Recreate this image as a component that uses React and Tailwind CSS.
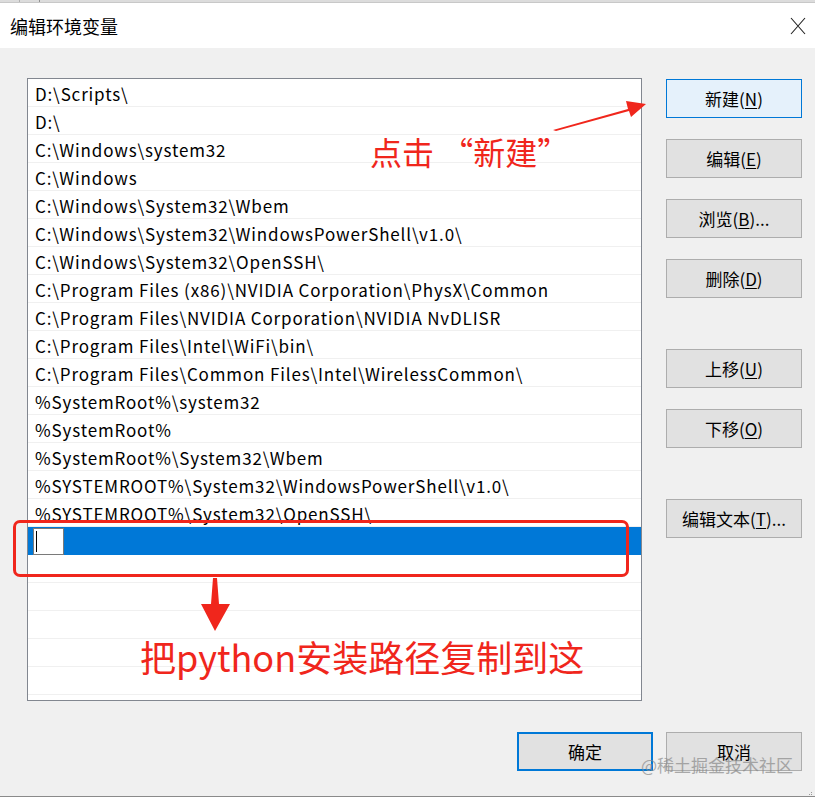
import React from "react";

const rows = [
  "D:\\Scripts\\",
  "D:\\",
  "C:\\Windows\\system32",
  "C:\\Windows",
  "C:\\Windows\\System32\\Wbem",
  "C:\\Windows\\System32\\WindowsPowerShell\\v1.0\\",
  "C:\\Windows\\System32\\OpenSSH\\",
  "C:\\Program Files (x86)\\NVIDIA Corporation\\PhysX\\Common",
  "C:\\Program Files\\NVIDIA Corporation\\NVIDIA NvDLISR",
  "C:\\Program Files\\Intel\\WiFi\\bin\\",
  "C:\\Program Files\\Common Files\\Intel\\WirelessCommon\\",
  "%SystemRoot%\\system32",
  "%SystemRoot%",
  "%SystemRoot%\\System32\\Wbem",
  "%SYSTEMROOT%\\System32\\WindowsPowerShell\\v1.0\\",
  "%SYSTEMROOT%\\System32\\OpenSSH\\",
];

const font = { fontFamily: '"Noto Sans CJK SC", "Noto Sans", sans-serif' };

function Btn({ label, u, suffix = "", primary, className = "" }) {
  return (
    <div
      className={
        "h-[39px] w-[136px] flex items-center justify-center text-[17px] text-black " +
        (primary
          ? "bg-[#e5f1fb] border border-[#0078d7] "
          : "bg-[#e1e1e1] border border-[#adadad] ") +
        className
      }
    >
      <span>
        {label}(<span className="underline underline-offset-2">{u}</span>){suffix}
      </span>
    </div>
  );
}

export default function App() {
  return (
    <div className="relative w-[815px] h-[800px] bg-white overflow-hidden flex flex-col" style={font}>
      {/* top strip */}
      <div className="h-[3px] bg-[#dcdcdc] border-b border-[#c8c8c8] flex">
        <div className="w-[20px] border-r border-[#b0b0b0]" />
        <div className="w-[20px] border-r border-[#909090]" />
      </div>
      {/* title bar */}
      <div className="h-[45px] bg-white flex items-center justify-between pl-[10px] pr-[6px]">
        <span className="text-[18px] text-black leading-none">编辑环境变量</span>
        <svg width="18" height="18" viewBox="0 0 18 18" className="mr-[2px]">
          <path d="M2 1 L16 17 M16 1 L2 17" stroke="#222" strokeWidth="1.1" fill="none" />
        </svg>
      </div>
      {/* body */}
      <div className="h-[749px] bg-[#f0f0f0] border-b border-[#8a8a8a] flex flex-col">
        <div className="flex pt-[30px] pl-[27px]">
          {/* list */}
          <div className="w-[615px] h-[623px] bg-white border border-[#828790] overflow-hidden flex flex-col">
            {rows.map((r, i) => (
              <div
                key={i}
                className="h-[28px] shrink-0 border-b border-[#f0f0f0] pl-[7px] pt-[2px] flex items-center text-[17px] tracking-[0.85px] text-black leading-none whitespace-nowrap"
              >
                {r}
              </div>
            ))}
            <div className="h-[28px] shrink-0 bg-[#0078d7] flex items-center pl-[5px]">
              <div className="w-[31px] h-[27px] bg-white border border-[#7a7a7a] flex items-center pl-[2px]">
                <div className="w-[1px] h-[21px] bg-black" />
              </div>
            </div>
            {[0, 1, 2, 3, 4, 5].map((i) => (
              <div key={i} className="h-[28px] shrink-0 border-b border-[#f0f0f0]" />
            ))}
          </div>
          {/* buttons */}
          <div className="ml-[24px] pt-[1px] flex flex-col">
            <Btn label="新建" u="N" primary />
            <Btn label="编辑" u="E" className="mt-[21px]" />
            <Btn label="浏览" u="B" suffix="..." className="mt-[21px]" />
            <Btn label="删除" u="D" className="mt-[21px]" />
            <Btn label="上移" u="U" className="mt-[51px]" />
            <Btn label="下移" u="O" className="mt-[21px]" />
            <Btn label="编辑文本" u="T" suffix="..." className="mt-[51px]" />
          </div>
        </div>
        <div className="flex justify-end gap-[13px] pr-[13px] mt-[31px]">
          <div className="h-[39px] w-[136px] flex items-center justify-center text-[17px] text-black bg-[#e1e1e1] border-2 border-[#0078d7]">
            确定
          </div>
          <div className="h-[39px] w-[136px] flex items-center justify-center text-[17px] text-black bg-[#e1e1e1] border border-[#adadad]">
            取消
          </div>
        </div>
      </div>

      {/* grip */}
      <div className="absolute right-[3px] bottom-[5px] grid grid-cols-3 gap-[1px]">
        <div className="w-[1px] h-[1px]" />
        <div className="w-[1px] h-[1px]" />
        <div className="w-[1px] h-[1px] bg-[#999]" />
        <div className="w-[1px] h-[1px]" />
        <div className="w-[1px] h-[1px] bg-[#999]" />
        <div className="w-[1px] h-[1px] bg-[#999]" />
      </div>

      {/* annotations */}
      <div className="absolute left-[13px] top-[520px] w-[616px] h-[57px] border-[3px] border-[#f0261c] rounded-[7px]" />
      <div className="absolute left-[370px] top-[135px] text-[32px] leading-none text-[#f0261c] whitespace-nowrap">
        点击 “新建”
      </div>
      <div className="absolute left-[140px] top-[638px] text-[36px] leading-none text-[#f0261c] whitespace-nowrap">
        把python安装路径复制到这
      </div>
      <svg className="absolute left-0 top-0" width="815" height="800" viewBox="0 0 815 800" style={{ pointerEvents: "none" }}>
        <polygon points="553,130 628,109 626,101 646,104 631,117 629,111 556,131" fill="#f0261c" />
        <polygon points="213,578 217,578 219,604 230,604 215,631 201,604 211,604" fill="#f0261c" />
      </svg>
      <div className="absolute left-[641px] top-[756px] text-[17px] leading-none text-[#8a8a8a] opacity-70 whitespace-nowrap">
        @稀土掘金技术社区
      </div>
    </div>
  );
}
